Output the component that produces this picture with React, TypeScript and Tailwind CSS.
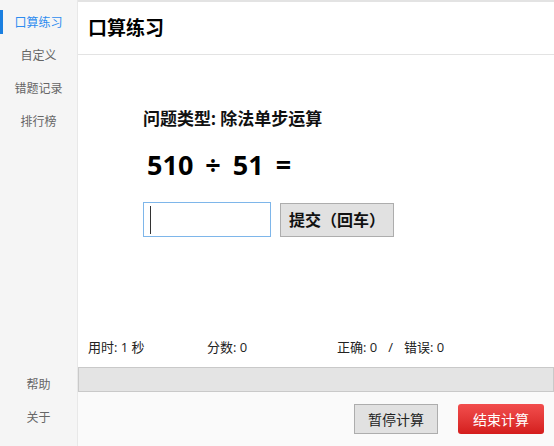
const font = { fontFamily: '"Open Sans", "Noto Sans CJK SC", sans-serif' };

function NavItem(props: { label: string; active?: boolean }) {
  const { label, active } = props;
  return (
    <div className="relative flex h-[33px] items-center justify-center">
      {active && <div className="absolute left-0 top-[4px] h-[24px] w-[3px] bg-[#1a7fe0]" />}
      <span className={active ? 'text-[12px] text-[#2d8cf0]' : 'text-[12px] text-[#666]'}>{label}</span>
    </div>
  );
}

export default function App() {
  return (
    <div className="flex h-[446px] w-[554px] overflow-hidden bg-white" style={font}>
      <div className="flex w-[78px] shrink-0 flex-col justify-between border-r border-[#e8e8e8] bg-[#f5f5f5] pt-[6px] pb-[12px]">
        <div>
          <NavItem label="口算练习" active />
          <NavItem label="自定义" />
          <NavItem label="错题记录" />
          <NavItem label="排行榜" />
        </div>
        <div>
          <NavItem label="帮助" />
          <NavItem label="关于" />
        </div>
      </div>

      <div className="flex flex-1 flex-col border-t-2 border-[#e3e3e3]">
        <div className="flex h-[53px] items-center border-b border-[#e3e3e3] pl-[10px]">
          <span className="text-[19px] font-bold text-black">口算练习</span>
        </div>

        <div className="flex flex-1 flex-col pl-[65px] pt-[52px]">
          <div className="text-[17px] font-bold leading-[24px] text-[#111]">问题类型: 除法单步运算</div>
          <div className="mt-[16px] pl-[4px] text-[27px] font-bold leading-[36px] text-black [word-spacing:5px]">510 ÷ 51 =</div>
          <div className="mt-[19px] flex items-center gap-[9px]">
            <div className="flex h-[35px] w-[128px] items-center border border-[#7eb6ea] bg-white pl-[6px]">
              <div className="h-[28px] w-[1px] bg-[#333]" />
            </div>
            <div className="flex h-[34px] w-[114px] items-center justify-center border border-[#adadad] bg-[#e1e1e1] text-[16px] font-bold text-[#111]">
              提交（回车）
            </div>
          </div>

          <div className="mt-auto mb-[10px] -ml-[55px] flex text-[13px] leading-[20px] text-[#222]">
            <span className="w-[119px]">用时: 1 秒</span>
            <span className="w-[130px]">分数: 0</span>
            <span>正确: 0</span>
            <span className="mx-[11px]">/</span>
            <span>错误: 0</span>
          </div>
        </div>

        <div className="h-[25px] border border-[#c9c9c9] bg-[#e4e4e4]" />

        <div className="flex h-[54px] items-center justify-end gap-[20px] bg-[#fafafa] pr-[10px]">
          <div className="flex h-[30px] w-[84px] items-center justify-center border border-[#adadad] bg-[#e1e1e1] text-[14px] text-[#222]">
            暂停计算
          </div>
          <div className="flex h-[30px] w-[86px] items-center justify-center rounded-[3px] bg-gradient-to-b from-[#f24d4d] to-[#d41c1c] text-[14px] text-white">
            结束计算
          </div>
        </div>
      </div>
    </div>
  );
}
